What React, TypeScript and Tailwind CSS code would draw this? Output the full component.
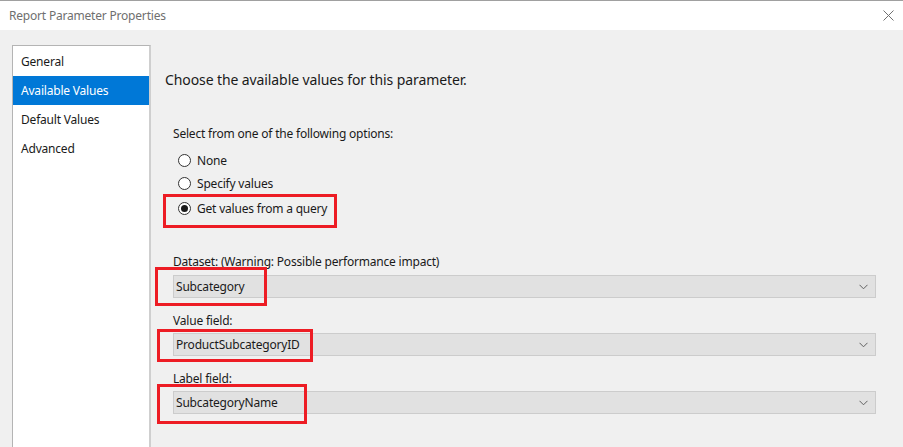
import React from "react";

const font = { fontFamily: '"Noto Sans", "Open Sans", sans-serif' };

function Radio({ checked, label }: { checked?: boolean; label: string }) {
  return (
    <div className="flex items-center h-[23px]">
      <span className="w-[13px] h-[13px] rounded-full border border-[#333] bg-white flex items-center justify-center ml-[5px] mr-[6px]">
        {checked && <span className="w-[7px] h-[7px] rounded-full bg-[#1a1a1a]" />}
      </span>
      <span className="text-[12px] tracking-[-0.2px] text-[#1a1a1a]">{label}</span>
    </div>
  );
}

function Select({ value }: { value: string }) {
  return (
    <div className="h-[23px] w-[703px] bg-[#e1e1e1] border border-[#cccccc] flex items-center justify-between pl-[2px] pr-[6px]">
      <span className="text-[12px] tracking-[-0.2px] text-[#1a1a1a]">{value}</span>
      <svg width="9" height="6" viewBox="0 0 9 6" className="mr-[1px]">
        <path d="M0.5 0.8 L4.5 4.8 L8.5 0.8" fill="none" stroke="#606060" strokeWidth="1" />
      </svg>
    </div>
  );
}

export default function App() {
  return (
    <div className="w-[903px] h-[447px] overflow-hidden relative bg-[#f0f0f0] border-t border-[#a0a0a0]" style={font}>
      <div className="h-[29px] bg-white flex items-center justify-between pl-[9px] pr-[9px]">
        <span className="text-[12px] tracking-[-0.2px] text-[#6f6f6f]">Report Parameter Properties</span>
        <svg width="11" height="11" viewBox="0 0 11 11">
          <path d="M0.5 0.5 L10.5 10.5 M10.5 0.5 L0.5 10.5" stroke="#707070" strokeWidth="1" />
        </svg>
      </div>
      <div className="flex pt-[15px] pl-[12px]">
        <div className="w-[139px] h-[420px] bg-white border border-[#b4b4b4] border-r-[2px] border-r-[#cfcfcf] pt-[1px] shrink-0">
          <div className="h-[29px] flex items-center pl-[8px] text-[12px] tracking-[-0.2px] text-[#1a1a1a]">General</div>
          <div className="h-[29px] flex items-center pl-[8px] text-[12px] tracking-[-0.2px] text-white bg-[#0078d7]">Available Values</div>
          <div className="h-[29px] flex items-center pl-[8px] text-[12px] tracking-[-0.2px] text-[#1a1a1a]">Default Values</div>
          <div className="h-[29px] flex items-center pl-[8px] text-[12px] tracking-[-0.2px] text-[#1a1a1a]">Advanced</div>
        </div>
        <div className="flex flex-col pl-[14px] pt-[25px]">
          <div className="text-[14px] tracking-[-0.1px] text-[#1a1a1a] leading-[20px]">Choose the available values for this parameter.</div>
          <div className="pl-[8px] pt-[36px] flex flex-col">
            <div className="text-[12px] tracking-[-0.2px] text-[#1a1a1a] leading-[16px]">Select from one of the following options:</div>
            <div className="mt-[7px] flex flex-col">
              <Radio label="None" />
              <Radio label="Specify values" />
              <div className="mt-[2px]">
                <Radio checked label="Get values from a query" />
              </div>
            </div>
            <div className="mt-[34px] text-[12px] tracking-[-0.2px] text-[#1a1a1a] leading-[16px]">Dataset: (Warning: Possible performance impact)</div>
            <div className="mt-[5px]"><Select value="Subcategory" /></div>
            <div className="mt-[15px] text-[12px] tracking-[-0.2px] text-[#1a1a1a] leading-[16px]">Value field:</div>
            <div className="mt-[4px]"><Select value="ProductSubcategoryID" /></div>
            <div className="mt-[15px] text-[12px] tracking-[-0.2px] text-[#1a1a1a] leading-[16px]">Label field:</div>
            <div className="mt-[4px]"><Select value="SubcategoryName" /></div>
          </div>
        </div>
      </div>
      {/* red annotation boxes */}
      <div className="absolute left-[163px] top-[193px] w-[174px] h-[34px] border-[3px] border-[#ed1c24]" />
      <div className="absolute left-[155px] top-[266px] w-[112px] h-[39px] border-[3px] border-[#ed1c24]" />
      <div className="absolute left-[157px] top-[328px] w-[156px] h-[33px] border-[3px] border-[#ed1c24]" />
      <div className="absolute left-[157px] top-[383px] w-[150px] h-[40px] border-[3px] border-[#ed1c24]" />
    </div>
  );
}
